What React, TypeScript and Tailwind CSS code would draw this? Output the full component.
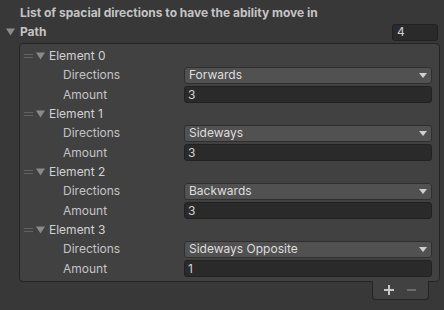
import React from 'react'

const ELEMENTS = [
  { direction: 'Forwards', amount: 3 },
  { direction: 'Sideways', amount: 3 },
  { direction: 'Backwards', amount: 3 },
  { direction: 'Sideways Opposite', amount: 1 },
]

function Foldout({ className = '' }: { className?: string }) {
  return (
    <svg width="9" height="8" viewBox="0 0 9 8" className={className}>
      <path d="M0 0.5 H9 L4.5 7.5 Z" fill="currentColor" />
    </svg>
  )
}

function DragHandle() {
  return (
    <div className="flex flex-col gap-[2px] w-[9px]">
      <div className="h-px bg-[#626262]" />
      <div className="h-px bg-[#626262]" />
    </div>
  )
}

function ElementRows({ index, direction, amount }: { index: number; direction: string; amount: number }) {
  return (
    <div>
      <div className="h-[19px] flex items-center pl-[4px]">
        <DragHandle />
        <Foldout className="ml-[3px] text-[#8a8a8a]" />
        <span className="ml-[4px] text-[#d2d2d2]">Element {index}</span>
      </div>
      <div className="h-[20px] flex items-center">
        <span className="w-[164px] pl-[43px] text-[#c4c4c4]">Directions</span>
        <div className="w-[248px] h-[17px] flex items-center justify-between rounded-[3px] border border-[#2f2f2f] bg-[#515151] pl-[4px] pr-[4px] text-[#dedede]">
          <span>{direction}</span>
          <svg width="8" height="5" viewBox="0 0 8 5">
            <path d="M0 0 H8 L4 5 Z" fill="#d0d0d0" />
          </svg>
        </div>
      </div>
      <div className="h-[19px] flex items-center">
        <span className="w-[164px] pl-[43px] text-[#c4c4c4]">Amount</span>
        <div className="w-[248px] h-[17px] flex items-center rounded-[3px] border border-[#212121] bg-[#2a2a2a] pl-[3px] text-[#d2d2d2]">
          {amount}
        </div>
      </div>
    </div>
  )
}

export default function App() {
  return (
    <div className="w-[444px] h-[310px] bg-[#383838] text-[12px] overflow-hidden" style={{ fontFamily: 'Inter, "Noto Sans", sans-serif' }}>
      <div className="h-[18px] mt-[4px] pl-[20px] flex items-center font-bold text-[#c4c4c4]">
        List of spacial directions to have the ability move in
      </div>
      <div className="h-[20px] flex items-center">
        <Foldout className="ml-[6px] text-[#8c8c8c]" />
        <span className="ml-[5px] font-bold text-[#c4c4c4] flex-1">Path</span>
        <div className="w-[46px] h-[17px] mr-[6px] flex items-center rounded-[3px] border border-[#212121] bg-[#2a2a2a] pl-[4px] text-[#d2d2d2]">
          4
        </div>
      </div>
      <div className="ml-[19px] w-[421px] mt-[1px]">
        <div className="rounded-[4px] border border-[#242424] bg-[#414141] pt-[2px] pb-[3px]">
          {ELEMENTS.map((e, i) => (
            <ElementRows key={i} index={i} direction={e.direction} amount={e.amount} />
          ))}
        </div>
        <div className="ml-[353px] w-[57px] h-[19px] -mt-px flex items-center pl-[11px] gap-[13px] rounded-b-[4px] border border-t-0 border-[#242424] bg-[#414141]">
          <svg width="10" height="10" viewBox="0 0 10 10">
            <path d="M4 0 H6 V4 H10 V6 H6 V10 H4 V6 H0 V4 H4 Z" fill="#c8c8c8" />
          </svg>
          <svg width="9" height="10" viewBox="0 0 9 10">
            <rect x="0" y="4" width="9" height="2" fill="#6c6c6c" />
          </svg>
        </div>
      </div>
    </div>
  )
}
